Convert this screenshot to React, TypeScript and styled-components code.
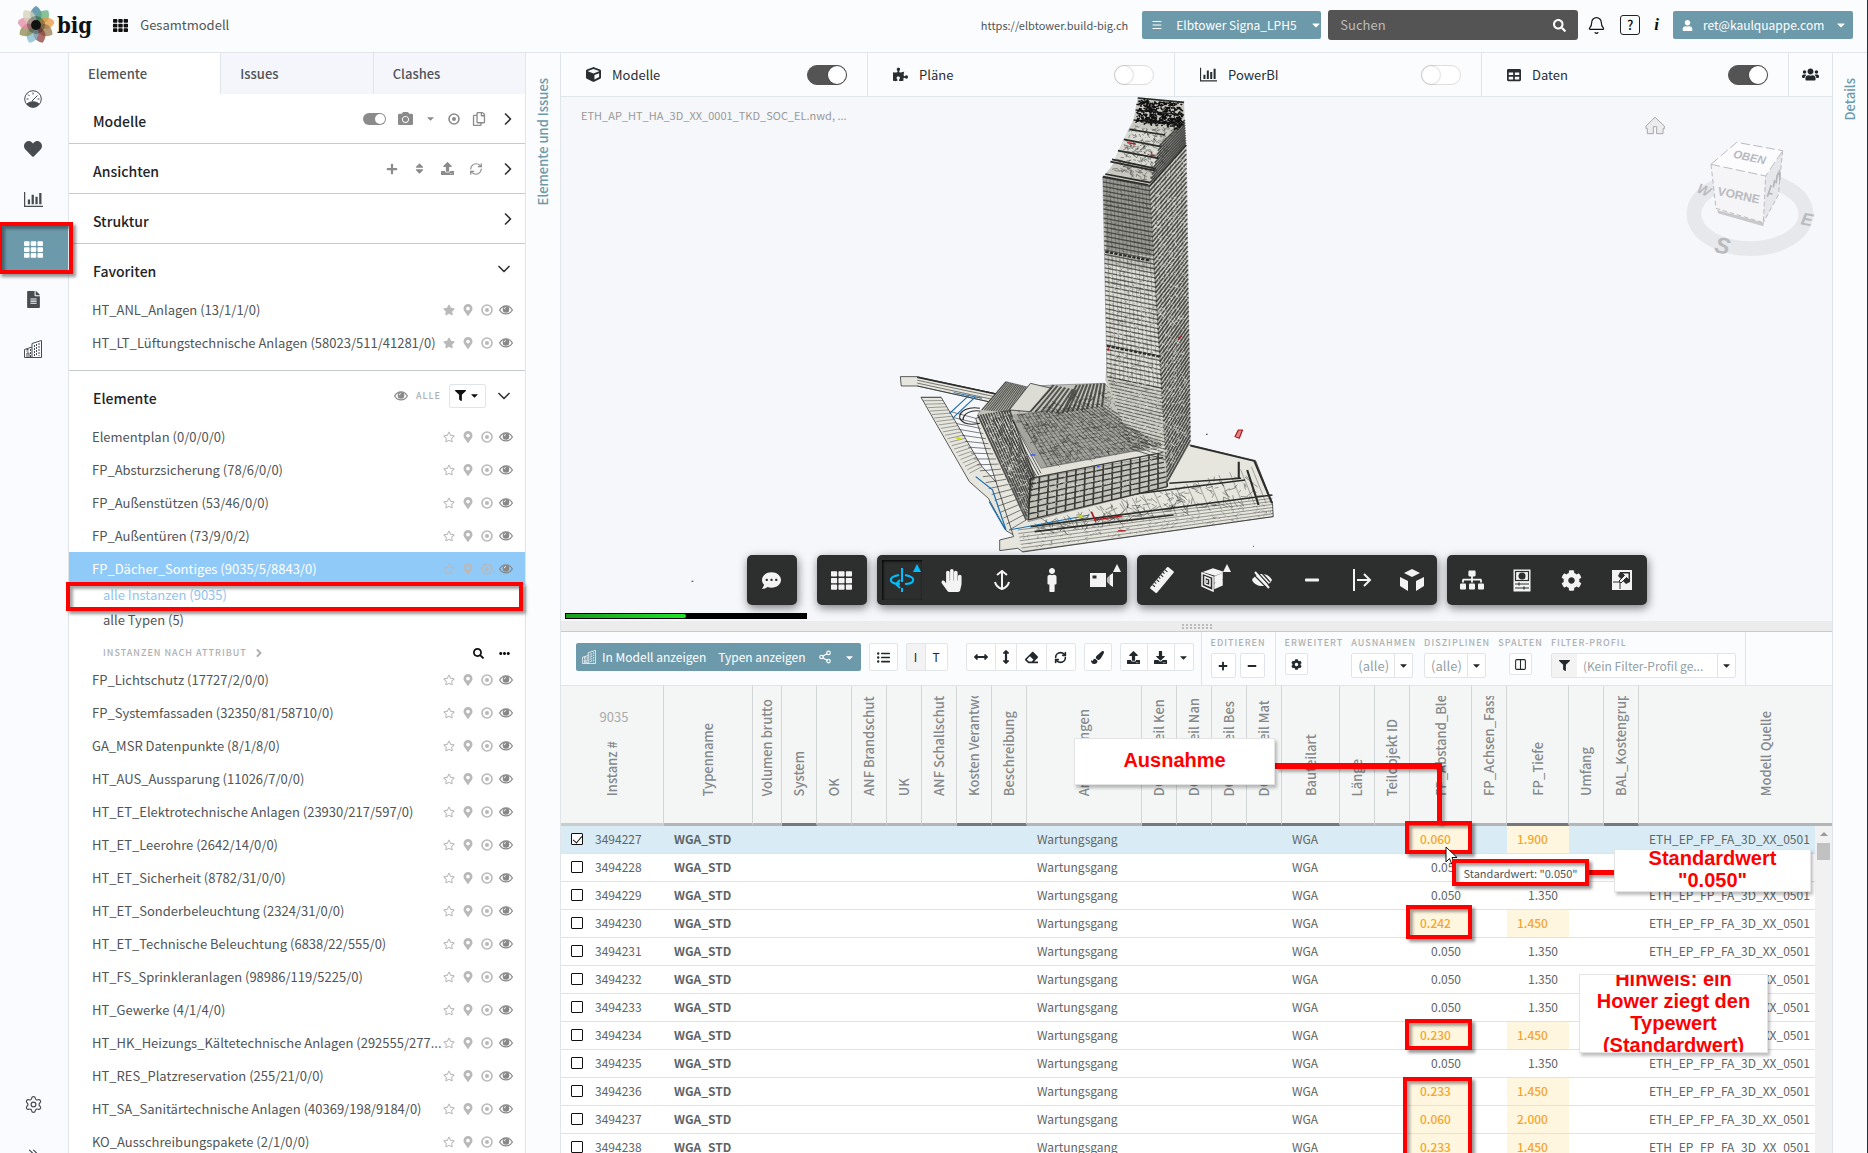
import React from 'react';
import styled, { createGlobalStyle, css } from 'styled-components';
import {
    FaArrowsAltH,
    FaArrowsAltV,
    FaCamera,
    FaCaretDown,
    FaCog,
    FaCommentDots,
    FaCube,
    FaDownload,
    FaEllipsisH,
    FaEraser,
    FaFileAlt,
    FaFilter,
    FaHandPaper,
    FaHeart,
    FaListUl,
    FaMale,
    FaMapMarkerAlt,
    FaMinus,
    FaPaintBrush,
    FaPlus,
    FaPuzzlePiece,
    FaRegCopy,
    FaRegStar,
    FaSearch,
    FaSitemap,
    FaSort,
    FaStar,
    FaTable,
    FaTh,
    FaUpload,
    FaUser,
    FaUsers,
} from 'react-icons/fa';
import {
    Bell,
    ChevronDown,
    ChevronRight,
    ChevronsRight,
    Columns2,
    Menu,
    RefreshCw,
    Settings,
    Share2,
} from 'lucide-react';

const sans = "'Noto Sans CJK SC', 'Noto Sans', sans-serif";

const colors = {
    teal: '#6d9aaa',
    border: '#dfe5e8',
    page: '#fafcfe',
    dark: '#2d2f2e',
    red: '#ff0000',
};

const GlobalStyle = createGlobalStyle`
    * {
        box-sizing: border-box;
    }

    body {
        margin: 0;
        background: ${colors.page};
        color: #505558;
        font-family: ${sans};
        font-size: 13px;
        line-height: 20px;
        overflow: hidden;
    }

    button, input, select {
        font: inherit;
        color: inherit;
        margin: 0;
    }

    button {
        background: none;
        border: 0;
        padding: 0;
        cursor: pointer;
    }

    svg {
        display: block;
        flex: none;
    }
`;

const Page = styled.div`
    position: relative;
    display: flex;
    flex-direction: column;
    height: 100vh;
    overflow: hidden;
    border-right: 1px solid #22333f;
`;

const Header = styled.header`
    display: flex;
    align-items: center;
    height: 53px;
    flex: none;
    padding: 0 14px 2px 18px;
    border-bottom: 1px solid ${colors.border};
`;

const Brand = styled.a`
    display: flex;
    align-items: center;
    gap: 3px;
    color: #111;
    text-decoration: none;
    font-family: 'DejaVu Serif Condensed', 'DejaVu Serif', serif;
    font-size: 22px;
    font-weight: bold;
    margin-right: 21px;
`;

const PageTitle = styled.h1`
    display: flex;
    align-items: center;
    gap: 12px;
    margin: 0 auto 0 0;
    font-size: 13px;
    font-weight: 400;

    svg {
        color: #111;
    }
`;

const HostLink = styled.a`
    color: #505558;
    font-size: 11px;
    text-decoration: none;
    margin-right: 14px;
`;

const TealButton = styled.button`
    display: flex;
    align-items: center;
    height: 28px;
    gap: 13px;
    padding: 0 6px 0 9px;
    border-radius: 2px;
    background: ${colors.teal};
    color: #fff;
    font-size: 12px;
    white-space: nowrap;

    svg:last-child {
        margin-left: auto;
    }
`;

const ProjectButton = styled(TealButton)`
    width: 179px;
`;

const UserButton = styled(TealButton)`
    width: 180px;
    gap: 10px;
`;

const SearchBox = styled.label`
    display: flex;
    align-items: center;
    width: 250px;
    height: 30px;
    margin: 0 9px 0 7px;
    padding: 0 12px 0 10px;
    border-radius: 3px;
    background: #545454;
    color: #fff;
`;

const SearchInput = styled.input`
    flex: 1;
    min-width: 0;
    border: 0;
    outline: 0;
    background: transparent;

    &::placeholder {
        color: #bbb;
        opacity: 1;
    }
`;

const HeaderIcon = styled.button`
    display: flex;
    justify-content: center;
    color: #111;
    margin-right: 14px;
`;

const HelpIcon = styled(HeaderIcon)`
    width: 20px;
    height: 20px;
    line-height: 18px;
    border: 1px solid #222;
    border-radius: 3px;
    font-weight: 500;
`;

const InfoIcon = styled(HeaderIcon)`
    font-family: 'Liberation Serif', serif;
    font-style: italic;
    font-weight: bold;
    font-size: 17px;
`;

const Body = styled.div`
    display: flex;
    flex: 1;
    min-height: 0;
`;

const Rail = styled.nav`
    display: flex;
    flex-direction: column;
    width: 69px;
    flex: none;
    padding-top: 21px;
    border-right: 1px solid ${colors.border};
    background: #f9fbfe;
    overflow: hidden;
`;

const RailButton = styled.button<{ $active?: boolean; $bottom?: boolean }>`
    display: flex;
    align-items: center;
    justify-content: center;
    flex: none;
    height: 50px;
    padding-right: 2px;
    color: ${(props) => (props.$active ? '#fff' : '#484c50')};
    background: ${(props) => (props.$active ? colors.teal : 'transparent')};
    margin-top: ${(props) => (props.$bottom ? 'auto' : '0')};
`;

const RailExpand = styled(RailButton)`
    align-items: flex-start;
    height: 24px;
    padding-top: 17px;
    overflow: hidden;
`;

const Sidebar = styled.aside`
    width: 457px;
    flex: none;
    background: #fff;
    border-right: 1px solid ${colors.border};
    overflow: hidden;
`;

const Tabs = styled.div`
    display: flex;
    height: 41px;
`;

const Tab = styled.button<{ $active?: boolean }>`
    flex: 1;
    text-align: left;
    padding: 0 0 0 19px;
    background: ${(props) => (props.$active ? '#fff' : '#f4f6fb')};
    border-left: ${(props) =>
        props.$active ? '0' : `1px solid ${colors.border}`};
    font-weight: 500;
`;

const Section = styled.section<{ $open?: boolean }>`
    border-bottom: 1px solid #c8cbcd;
    padding-bottom: ${(props) => (props.$open ? '11px' : '0')};

    &:last-child {
        border-bottom: 0;
    }
`;

const SectionHead = styled.div`
    display: flex;
    align-items: center;
    justify-content: space-between;
    height: 49px;
    padding: 0 11px 0 24px;

    h2 {
        margin: 4px 0 0;
        font-size: 14px;
        font-weight: 500;
        color: #1e2427;
    }
`;

const Tools = styled.div<{ $gap?: number }>`
    display: flex;
    align-items: center;
    color: #8b8b8b;
    gap: ${(props) => props.$gap ?? 12}px;
`;

const NextIcon = styled(ChevronRight)`
    color: #333;
    margin-right: -4px;
`;

const OpenIcon = styled(ChevronDown)`
    color: #333;
`;

const SmallCaps = styled.span`
    font-size: 9px;
    font-weight: 500;
    letter-spacing: 1px;
    color: #adb0b2;
    text-transform: uppercase;
`;

const FilterMenu = styled.button`
    display: flex;
    align-items: center;
    gap: 3px;
    padding: 0 5px;
    height: 24px;
    border: 1px solid #e2e5e8;
    border-radius: 2px;
    color: #111;
`;

const Row = styled.div<{ $selected?: boolean }>`
    display: flex;
    align-items: center;
    height: 33px;
    padding: 0 13px 0 23px;
    background: ${(props) => (props.$selected ? '#90caf9' : 'transparent')};
    color: ${(props) => (props.$selected ? '#fff' : '#505558')};
`;

const RowName = styled.a`
    flex: 1;
    min-width: 0;
    white-space: nowrap;
    color: inherit;
    text-decoration: none;
`;

const RowIcons = styled.span`
    display: flex;
    align-items: center;
    gap: 6px;
    color: #b9b9b9;

    button {
        display: flex;
        justify-content: center;
        width: 13px;
    }

    button:last-child {
        color: #888;
    }
`;

const SubList = styled.ul`
    list-style: none;
    margin: 0;
    padding: 0 0 0 34px;

    li {
        height: 25px;
    }
`;

const SubLink = styled.a<{ $active?: boolean }>`
    color: ${(props) => (props.$active ? '#90c4f0' : '#505558')};
    text-decoration: none;
`;

const AttributeRow = styled.div`
    display: flex;
    align-items: center;
    height: 28px;
    padding: 8px 15px 0 34px;
    gap: 15px;
    color: #111;

    ${SmallCaps} {
        display: flex;
        align-items: center;
        gap: 6px;
        margin-right: auto;
    }
`;

const SideStrip = styled.div<{ $right?: boolean }>`
    width: 35px;
    flex: none;
    display: flex;
    justify-content: center;
    background: ${colors.page};
    border: 0 solid ${colors.border};
    ${(props) =>
        props.$right
            ? css`
                  border-left-width: 1px;
              `
            : css`
                  border-right-width: 1px;
              `}
    padding-top: 25px;
`;

const VerticalLabel = styled.button`
    writing-mode: vertical-rl;
    transform: rotate(180deg);
    align-self: flex-start;
    color: ${colors.teal};
    font-weight: 500;
    font-size: 13px;
    white-space: nowrap;
`;

const Main = styled.main`
    display: flex;
    flex-direction: column;
    flex: 1;
    min-width: 0;
`;

const ViewBar = styled.div`
    display: flex;
    height: 44px;
    flex: none;
    border-bottom: 1px solid ${colors.border};
`;

const ViewCell = styled.label`
    display: flex;
    align-items: center;
    flex: 1;
    gap: 11px;
    padding: 0 20px 0 25px;
    border-right: 1px solid ${colors.border};
    color: #2a2e31;

    input {
        margin-left: auto;
    }
`;

const ViewUsers = styled.button`
    display: flex;
    align-items: center;
    justify-content: center;
    width: 43px;
    color: #22272a;
`;

const Switch = styled.input`
    appearance: none;
    position: relative;
    width: 40px;
    height: 20px;
    border-radius: 10px;
    background: #fff;
    border: 1px solid #ddd;

    &::after {
        content: '';
        position: absolute;
        top: 0;
        left: 0;
        width: 18px;
        height: 18px;
        border-radius: 50%;
        background: #fff;
        box-shadow: 0 0 2px rgba(0, 0, 0, 0.35);
    }

    &:checked {
        background: #545454;
        border-color: #545454;
    }

    &:checked::after {
        left: auto;
        right: 0;
    }
`;

const Viewer = styled.div`
    position: relative;
    flex: none;
    height: 524px;
    background: #f5f7fb;
    overflow: hidden;
`;

const Scene = styled.svg`
    position: absolute;
    top: 0;
    left: 0;
`;

const Cube = styled.svg`
    position: absolute;
    top: 3px;
    right: 2px;
`;

const FileNames = styled.p`
    position: relative;
    margin: 8px 0 0 20px;
    font-size: 11px;
    color: #999;
`;

const Dock = styled.div`
    position: absolute;
    left: 0;
    right: 0;
    bottom: 16px;
    display: flex;
    justify-content: center;
    gap: 10px;
`;

const DockGroup = styled.div<{ $gap?: boolean }>`
    display: flex;
    height: 50px;
    border-radius: 5px;
    background: ${colors.dark};
    box-shadow: 1px 3px 10px rgba(0, 0, 0, 0.5);
    margin-right: ${(props) => (props.$gap ? '10px' : '0')};
`;

const DockButton = styled.button<{ $active?: boolean }>`
    position: relative;
    display: flex;
    align-items: center;
    justify-content: center;
    width: 50px;
    color: ${(props) => (props.$active ? '#00bfff' : '#f3f3f3')};

    ${(props) =>
        props.$active &&
        css`
            margin: 5px;
            width: 40px;
            box-shadow: inset 1px 1px 3px #000;
        `}
`;

const DockMark = styled.i<{ $active?: boolean }>`
    position: absolute;
    right: ${(props) => (props.$active ? '1px' : '6px')};
    top: ${(props) => (props.$active ? '4px' : '9px')};
    border: 4px solid transparent;
    border-top: 0;
    border-bottom: 8px solid currentColor;
`;

const Progress = styled.div`
    position: absolute;
    left: 4px;
    bottom: 2px;
    width: 242px;
    height: 6px;
    padding: 1px;
    background: #000;

    div {
        height: 4px;
        border-radius: 0 2px 2px 0;
        background: linear-gradient(90deg, #189c1c, #20e428);
    }
`;

const Splitter = styled.div`
    display: flex;
    align-items: center;
    justify-content: center;
    height: 11px;
    flex: none;
    background: #ececec;
    border-bottom: 1px solid #c9ccce;
`;

const DataBar = styled.div`
    display: flex;
    align-items: stretch;
    height: 54px;
    flex: none;
    padding-left: 15px;
    border-bottom: 1px solid ${colors.border};
    color: #22282b;
`;

const BarSection = styled.div`
    display: flex;
    align-items: center;
    gap: 8px;
    padding: 0 7px 3px 0;
    border-right: 1px solid ${colors.border};
`;

const FieldSection = styled.div`
    display: flex;
    gap: 8px;
    padding: 3px 9px 0;
    border-right: 1px solid ${colors.border};
`;

const Field = styled.div<{ $center?: boolean }>`
    display: flex;
    flex-direction: column;
    align-items: ${(props) => (props.$center ? 'center' : 'flex-start')};
    gap: 2px;
    line-height: 16px;
`;

const FieldLabel = styled.label`
    font-size: 9px;
    font-weight: 500;
    letter-spacing: 1px;
    color: #adb0b2;
    text-transform: uppercase;
    white-space: nowrap;
`;

const ButtonPair = styled.div`
    display: flex;
    gap: 4px;
`;

const SquareButton = styled.button<{ $small?: boolean }>`
    display: flex;
    align-items: center;
    justify-content: center;
    width: ${(props) => (props.$small ? '23px' : '25px')};
    height: ${(props) => (props.$small ? '22px' : '25px')};
    border: 1px solid #e2e5e8;
    border-radius: 2px;
    background: #fff;
`;

const SelectBox = styled.div`
    position: relative;
    display: flex;
    height: 25px;
    border: 1px solid #e2e5e8;
    border-radius: 2px;
    background: #fff;
    align-items: center;

    > svg:first-child {
        box-sizing: content-box;
        padding: 6px 7px;
        background: #f3f3f3;
    }

    > svg:last-child {
        box-sizing: content-box;
        position: absolute;
        right: 0;
        padding: 6px 3px;
        border-left: 1px solid #e2e5e8;
        pointer-events: none;
    }
`;

const Select = styled.select<{ $wide?: boolean }>`
    appearance: none;
    width: ${(props) => (props.$wide ? '158px' : '60px')};
    padding: 0 18px 0 6px;
    border: 0;
    background: transparent;
    color: #93a0a6;
    font-size: ${(props) => (props.$wide ? '12px' : '13px')};
`;

const TealGroup = styled.div`
    display: flex;
    height: 28px;
    border-radius: 2px;
    background: ${colors.teal};
    color: #fff;

    button {
        display: flex;
        align-items: center;
        gap: 6px;
        padding: 0 6px;
        font-size: 12px;
        white-space: nowrap;
    }
`;

const ButtonGroup = styled.div<{ $gap?: boolean }>`
    display: flex;
    height: 28px;
    border: 1px solid #e2e5e8;
    border-radius: 2px;
    background: #fff;
    margin-right: ${(props) => (props.$gap ? '10px' : '0')};
    font-size: 12px;
`;

const GroupButton = styled.button<{ $width: number; $pressed?: boolean }>`
    display: flex;
    align-items: center;
    justify-content: center;
    width: ${(props) => props.$width}px;
    background: ${(props) => (props.$pressed ? '#f3f3f3' : 'transparent')};

    & + & {
        border-left: 1px solid #e2e5e8;
    }
`;

const TablePanel = styled.div`
    position: relative;
    flex: 1;
    min-height: 0;
    overflow: hidden;
    background: #fff;
`;

const Table = styled.table`
    width: 100%;
    table-layout: fixed;
    border-collapse: separate;
    border-spacing: 0;
    color: #606466;
`;

const HeadCell = styled.th<{ $bar: string }>`
    height: 140px;
    padding: 0 0 27px;
    vertical-align: bottom;
    background: #f4f6f6;
    border-bottom: 3px solid ${(props) => props.$bar};
    border-right: 1px solid #d3d6d7;
    font-weight: 500;
    color: #85898b;

    &:last-child {
        border-right: 0;
        padding-left: 60px;
    }

    span {
        display: inline-block;
        vertical-align: bottom;
        writing-mode: vertical-rl;
        transform: rotate(180deg);
        max-height: 100px;
        overflow: hidden;
        white-space: nowrap;
    }

    small {
        display: block;
        margin-bottom: 14px;
        padding-left: 4px;
        font-size: 13px;
        font-weight: 400;
        color: #aaa;
    }
`;

const DataRow = styled.tr<{ $selected?: boolean }>`
    background: ${(props) => (props.$selected ? '#d9ecf5' : '#fff')};
`;

const Cell = styled.td<{ $exception?: boolean; $indent?: number }>`
    height: 28px;
    padding: 0 0 2px ${(props) => props.$indent ?? 10}px;
    border-bottom: 1px solid #dfe3e5;
    overflow: hidden;
    white-space: nowrap;
    font-size: 12px;

    ${(props) =>
        props.$exception &&
        css`
            padding-left: 10px;
            background: #fff6e0;
            color: #f5a52a;
            font-weight: 500;
        `}
`;

const TypeCell = styled(Cell)`
    font-weight: 700;
`;

const IdLabel = styled.label`
    display: flex;
    align-items: center;
    gap: 12px;
`;

const CheckBox = styled.input`
    appearance: none;
    position: relative;
    width: 12px;
    height: 12px;
    border: 1px solid #111;
    border-radius: 1px;
    background: #fff;

    &:checked::after {
        content: '';
        position: absolute;
        left: 3px;
        top: 0;
        width: 4px;
        height: 8px;
        border: solid #111;
        border-width: 0 1px 1px 0;
        transform: rotate(40deg);
    }
`;

const ScrollTrack = styled.div`
    position: absolute;
    top: 140px;
    right: 0;
    bottom: 0;
    width: 17px;
    padding: 6px 2px;
    background: #f1f1f1;

    &::before {
        content: '';
        display: block;
        width: 0;
        margin: 0 auto 7px;
        border: 4px solid transparent;
        border-top: 0;
        border-bottom-color: #9b9b9b;
    }

    &::after {
        content: '';
        display: block;
        height: 17px;
        background: #c1c1c1;
    }
`;

const Annotations = styled.div`
    position: absolute;
    inset: 0;
    pointer-events: none;
`;

type Box = { $x: number; $y: number; $w: number; $h: number };

const placed = css<Box>`
    position: absolute;
    left: ${(props) => props.$x}px;
    top: ${(props) => props.$y}px;
    width: ${(props) => props.$w}px;
    height: ${(props) => props.$h}px;
`;

const RedFrame = styled.div<Box>`
    ${placed}
    border: 4px solid ${colors.red};
    box-shadow: 3px 3px 3px rgba(0, 0, 0, 0.4),
        inset 3px 3px 3px rgba(0, 0, 0, 0.35);
`;

const RedLine = styled.div<Box>`
    ${placed}
    background: ${colors.red};
    box-shadow: 3px 3px 3px rgba(0, 0, 0, 0.3);
`;

const Callout = styled.div<Box>`
    ${placed}
    display: flex;
    align-items: center;
    justify-content: center;
    overflow: hidden;
    padding-bottom: 4px;
    background: #fff;
    border: 1px solid #e4e4e4;
    box-shadow: 2px 3px 3px rgba(0, 0, 0, 0.25);
    color: ${colors.red};
    font-family: 'Liberation Sans', Arial, sans-serif;
    font-weight: bold;
    font-size: 20px;
    line-height: 22px;
    text-align: center;
`;

const ValueTip = styled(RedFrame)`
    display: flex;
    align-items: center;
    justify-content: center;
    background: #fff;
    color: #505558;
    font-size: 11px;
    white-space: nowrap;
`;

const Pointer = styled.svg`
    position: absolute;
    left: 1445px;
    top: 846px;
`;

const petals = [
    '#3c7f9b',
    '#5fae77',
    '#e9973c',
    '#9a7b4d',
    '#8b3f3a',
    '#7fb9cc',
    '#8d8a4e',
    '#e48aa4',
    '#d8d2b8',
];

const Logo = () => (
    <svg width="36" height="38" viewBox="-18 -19 36 38">
        {petals.map((fill, i) => (
            <path
                key={fill}
                d="M0 0C-10 -9 -5 -16 0 -19C5 -16 10 -9 0 0Z"
                fill={fill}
                opacity="0.75"
                transform={`rotate(${i * 40})`}
            />
        ))}
        <circle r="9" fill="#111" opacity="0.3" />
        <circle r="5" fill="#111" />
    </svg>
);

const ChartIcon = ({ size = 19 }: { size?: number }) => (
    <svg width={size} height={size * 0.85} viewBox="0 0 20 17" fill="currentColor">
        <path d="M0 1h1.3v14.5H20V17H0zM4 9h2.4v5H4zM8 4h2.4v10H8zM12 6h2.4v8H12zM16 2h2.4v12H16z" />
    </svg>
);

const BuildingIcon = ({ size = 18 }: { size?: number }) => (
    <svg
        width={size}
        height={size}
        viewBox="0 0 18 18"
        fill="none"
        stroke="currentColor"
    >
        <path d="M.5 17.500V9.500L8 7M.5 17.500H17.500M8 17.500V3.500L17.500.5V17.500M5 17v-4H3v4" />
        <path
            d="M10.500 5v11M12.500 4v12M15 3v13M2.500 11h3M2.500 9.500h3M6.500 9v8"
            strokeDasharray="2 1"
        />
    </svg>
);

const GaugeIcon = () => (
    <svg width="18" height="18" viewBox="0 0 18 18" fill="none" stroke="currentColor">
        <circle cx="9" cy="9" r="8.300" />
        <path d="M3 14C6 11 12 11 15 14C12 18 6 18 3 14Z" fill="currentColor" />
        <path d="M8 11L13.500 5.500M9 2.500v2M4 4.500l1.500 1.500M2.500 9h2M13.500 9h2" />
    </svg>
);

const TargetIcon = () => (
    <svg width="12" height="12" viewBox="0 0 12 12">
        <circle
            cx="6"
            cy="6"
            r="5"
            fill="none"
            stroke="currentColor"
            strokeWidth="1.600"
        />
        <circle cx="6" cy="6" r="2" fill="currentColor" />
    </svg>
);

const EyeIcon = () => (
    <svg width="14" height="10" viewBox="0 0 14 10">
        <path
            d="M.6 5C3.500 -.6 10.500 -.6 13.400 5C10.500 10.200 3.500 10.200 .6 5Z"
            fill="none"
            stroke="currentColor"
            strokeWidth="1.200"
        />
        <circle cx="7" cy="4.400" r="3.300" fill="currentColor" />
        <path
            d="M5.200 4.200A1.900 1.900 0 0 1 7 2.500"
            fill="none"
            stroke="#fff"
            strokeWidth="0.800"
        />
    </svg>
);

const OrbitIcon = () => (
    <svg
        width="26"
        height="26"
        viewBox="0 0 26 26"
        fill="none"
        stroke="currentColor"
        strokeWidth="2"
    >
        <path d="M13 1v14M13 21v4" />
        <path d="M10 8C4 9 1 11 2 14c1 2 5 3 9 3M16 8c6 1 9 3 8 6-1 2-4 3-8 3" />
        <path d="M11 13l-4 4 4 4" />
    </svg>
);

const PanIcon = () => (
    <svg
        width="20"
        height="22"
        viewBox="0 0 20 22"
        fill="none"
        stroke="currentColor"
        strokeWidth="2"
    >
        <path d="M10 2v18M5 6l5-4 5 4M3 13C4 17 7 19 10 20C13 19 16 17 17 13" />
    </svg>
);

const VideoIcon = () => (
    <svg width="24" height="16" viewBox="0 0 24 16" fill="currentColor">
        <path d="M0 1h16v14H0zM2.500 3.500v3h4v-3z" fillRule="evenodd" />
        <path d="M17 6l3-3v10l-3-3z" opacity="0.7" />
        <path d="M20 3l3-2v14l-3-2z" />
    </svg>
);

const RulerIcon = () => (
    <svg width="28" height="28" viewBox="0 0 26 26">
        <g transform="rotate(-50 13 13)">
            <rect x="0" y="9" width="26" height="8" rx="1" fill="currentColor" />
            <path
                d="M4 9v3M7 9v2M10 9v3M13 9v2M16 9v3M19 9v2M22 9v3"
                stroke={colors.dark}
            />
        </g>
    </svg>
);

const SectionIcon = () => (
    <svg
        width="22"
        height="24"
        viewBox="0 0 22 24"
        fill="none"
        stroke="currentColor"
        strokeWidth="1.500"
    >
        <path d="M1 5l11 4v14L1 18zM4 9l5 2v7l-5-2zM6 12v3" />
        <path d="M4 4l8-3 9 3-7 3zM14 9l7-3v5l-3 3h-4zM14 16l7-3v4l-7 3z" fill="currentColor" />
    </svg>
);

const HideIcon = () => (
    <svg width="22" height="20" viewBox="0 0 22 20">
        <path d="M1 10C5 2 17 2 21 10C17 18 5 18 1 10Z" fill="currentColor" />
        <path
            d="M3 5l12 12M7 3l11 12M11 3l8 9"
            stroke={colors.dark}
            strokeWidth="1.200"
        />
        <path d="M4 2l14 16" stroke="currentColor" strokeWidth="2" />
    </svg>
);

const LevelIcon = () => (
    <svg
        width="20"
        height="24"
        viewBox="0 0 20 24"
        fill="none"
        stroke="currentColor"
        strokeWidth="2"
    >
        <path d="M2 1v22M5 12h13M12 6l6 6-6 6" />
    </svg>
);

const ExplodeIcon = () => (
    <svg width="26" height="24" viewBox="0 0 26 24" fill="currentColor">
        <path d="M13 1l8 4-8 4-8-4zM1 9l8 4v10l-8-5zM25 9l-8 4v10l8-5z" />
    </svg>
);

const PropertiesIcon = () => (
    <svg width="18" height="23" viewBox="0 0 18 23">
        <rect x="0.5" y="0.5" width="17" height="22" fill="currentColor" />
        <g stroke={colors.dark} strokeWidth="1.200" fill={colors.dark}>
            <rect x="2.500" y="2.500" width="13" height="9" fill="none" />
            <circle cx="9" cy="7" r="3" />
            <path d="M2 15h14M2 19h14M6 13.500v3M11 17.500v3" />
        </g>
    </svg>
);

const FullscreenIcon = () => (
    <svg width="20" height="20" viewBox="0 0 20 20">
        <rect x="1" y="1" width="18" height="18" fill="none" stroke="currentColor" strokeWidth="2" />
        <path d="M2 2H8L6 6L14 14L18 12V18H2Z" fill="currentColor" />
        <path d="M10 3h7v7l-2.500-2.500L9 13 7 11l5.500-5.500z" fill="currentColor" stroke={colors.dark} />
        <path d="M1 12h7v7" fill="none" stroke={colors.dark} />
    </svg>
);

const MiniToggle = () => (
    <svg width="23" height="12" viewBox="0 0 23 12">
        <rect width="23" height="12" rx="6" fill="#8b8b8b" />
        <circle cx="17" cy="6" r="5" fill="#fff" />
    </svg>
);

const GripIcon = () => (
    <svg width="30" height="5" viewBox="0 0 30 5" fill="#bbb">
        {Array.from({ length: 8 }, (_, i) => (
            <path key={i} d={`M${i * 4} 0h2v2h-2zM${i * 4} 3h2v2h-2z`} />
        ))}
    </svg>
);

type Point = [number, number];

const mix = (a: Point, b: Point, t: number): Point => [
    a[0] + (b[0] - a[0]) * t,
    a[1] + (b[1] - a[1]) * t,
];

const line = (a: Point, b: Point) =>
    `M${a[0].toFixed(1)} ${a[1].toFixed(1)}L${b[0].toFixed(1)} ${b[1].toFixed(1)}`;

// rungs between two edges, from a0-b0 to a1-b1
const rungs = (a0: Point, a1: Point, b0: Point, b1: Point, count: number) =>
    Array.from({ length: count + 1 }, (_, i) =>
        line(mix(a0, a1, i / count), mix(b0, b1, i / count)),
    ).join('');

const mesh = (
    a0: Point,
    a1: Point,
    b0: Point,
    b1: Point,
    rows: number,
    cols: number,
) => rungs(a0, a1, b0, b1, rows) + rungs(a0, b0, a1, b1, cols);

let seed = 7;
const random = () => {
    seed = (seed * 16807) % 2147483647;
    return seed / 2147483647;
};

// short random strokes inside a quad, for furniture and structure detail
const scatter = (
    a0: Point,
    a1: Point,
    b0: Point,
    b1: Point,
    count: number,
    len: number,
) =>
    Array.from({ length: count }, () => {
        const t = random();
        const p = mix(mix(a0, a1, t), mix(b0, b1, t), random());
        const q: Point = [
            p[0] + (random() - 0.5) * len,
            p[1] + (random() - 0.5) * len,
        ];
        return line(p, q);
    }).join('');

const ink = {
    crown: scatter([948, 30], [940, 95], [1050, 42], [1053, 118], 420, 14),
    terraces: scatter([930, 110], [892, 245], [1040, 115], [980, 275], 260, 24),
    terraceEdges:
        'M862 260L970 285M868 252L975 278M880 215L985 242M884 208L988 236M898 182L995 205M912 148L1000 170M925 118L1010 135M935 90L1055 105M940 60L1055 75M945 24L1055 37',
    leftFloors: rungs([862, 262], [872, 860], [972, 288], [1003, 895], 44),
    leftFloorsLow: rungs([872, 860], [925, 1075], [1003, 895], [1012, 1110], 20),
    leftColumns: rungs([862, 262], [972, 288], [872, 860], [1003, 895], 13),
    rightFloors: rungs([972, 290], [1015, 1175], [1060, 165], [1070, 1050], 64),
    rightTop: rungs([995, 170], [972, 290], [1057, 90], [1060, 165], 10),
    rightColumns: rungs([972, 290], [1060, 165], [1015, 1175], [1070, 1050], 7),
    leftDetail: scatter([866, 270], [880, 900], [970, 290], [1005, 1000], 620, 14),
    leftLight: scatter([872, 530], [880, 860], [980, 550], [1000, 900], 380, 14),
    rightDetail: scatter([978, 300], [1015, 1150], [1055, 180], [1065, 1040], 620, 18),
    lowDetail: scatter([872, 860], [930, 1065], [1003, 895], [1012, 1100], 280, 18),
    front: mesh([690, 1165], [685, 1290], [1015, 1085], [1015, 1190], 7, 15),
    frontLight: scatter([695, 1175], [690, 1280], [1010, 1095], [1010, 1180], 180, 12),
    leftFacade: rungs([565, 975], [640, 960], [680, 1290], [700, 1160], 12),
    facadeDetail: scatter([575, 980], [640, 970], [675, 1270], [695, 1170], 240, 20),
    courtyard: rungs([660, 975], [860, 940], [730, 1130], [1005, 1065], 24),
    courtyardCross: rungs([660, 975], [730, 1130], [860, 940], [1005, 1065], 16),
    courtyardDetail: scatter([650, 960], [730, 1130], [880, 900], [1005, 1065], 520, 26),
    balconies:
        rungs([690, 965], [765, 970], [745, 885], [800, 900], 6) +
        rungs([765, 970], [860, 950], [800, 885], [866, 880], 8),
    roof: rungs([575, 960], [640, 968], [632, 875], [680, 890], 12),
    stairs: rungs([430, 922], [545, 1150], [478, 922], [575, 1130], 22),
    walkway: rungs([500, 965], [640, 1320], [560, 985], [680, 1290], 20),
    slab: rungs([660, 1320], [670, 1385], [1265, 1225], [1267, 1280], 6),
    slabDetail: scatter([665, 1335], [672, 1380], [1262, 1240], [1264, 1278], 160, 16),
    deck: scatter([720, 1300], [720, 1330], [1200, 1150], [1240, 1225], 190, 40),
    deckLines: rungs([700, 1300], [1215, 1130], [720, 1335], [1250, 1240], 20),
    arm: rungs([421, 862], [421, 888], [610, 912], [590, 935], 3),
    roofEdge: rungs([640, 975], [600, 990], [715, 1150], [690, 1175], 5),
};

const Building = () => (
    <Scene width="100%" height="524" aria-hidden="true">
        <g
            transform="translate(179 -7) scale(.4209 .3333)"
            fill="none"
            stroke="#2c2c2a"
            strokeLinejoin="round"
        >
            <g fill="#e6e6df" strokeWidth="2">
                <path d="M381 860H421L610 912L590 935L421 888H383Z" />
                <path d="M430 922H478L575 1130L690 1290L650 1335L632 1322L590 1225L545 1175Z" />
                <path d="M1070 1065L1225 1112L1265 1240L1267 1280L672 1386L660 1375L617 1382V1350L650 1340L560 985L630 960L1000 1060Z" />
            </g>
            <g strokeWidth="2">
                <path d={ink.arm} opacity="0.8" />
                <path d={ink.stairs} opacity="0.55" />
                <path d={ink.walkway} opacity="0.8" />
                <path d={ink.slab} opacity="0.6" />
                <path d={ink.slabDetail} opacity="0.4" />
                <path d={ink.deck} opacity="0.6" />
                <path d={ink.deckLines} opacity="0.5" />
            </g>
            <path
                d="M1020 1180L1190 1165M920 1215L1200 1170M690 1310L1265 1215M700 1325L1030 1275M1205 1140L1232 1245M1185 1115V1165M1070 1067L1222 1113L1264 1240"
                strokeWidth="5"
            />
            <path d="M421 862L608 912" strokeWidth="5" />
            <path
                d="M565 972L632 875L680 890L745 885L866 880L1015 1060V1190L685 1295Z"
                fill="#c2c2bb"
            />
            <path
                d="M640 975L700 965L860 950L1010 1065L930 1085L715 1140Z"
                fill="#a5a59f"
                stroke="none"
            />
            <path
                d="M715 1135L930 1085L1005 1075V1095L700 1165L600 990L640 975Z"
                fill="#e2e2db"
            />
            <path d={ink.courtyard} strokeWidth="2" opacity="0.7" />
            <path d={ink.courtyardCross} strokeWidth="1" opacity="0.6" />
            <path d={ink.courtyardDetail} strokeWidth="2" opacity="0.6" />
            <path d={ink.leftFacade} strokeWidth="4" opacity="0.8" />
            <path d={ink.facadeDetail} strokeWidth="2" stroke="#ededE6" opacity="0.7" />
            <path d={ink.roofEdge} strokeWidth="2" />
            <path d={ink.roof} strokeWidth="3" opacity="0.7" />
            <path
                d="M640 960L690 880L740 895L690 965Z"
                fill="#dcdcd5"
                strokeWidth="2"
            />
            <path d={ink.balconies} strokeWidth="5" opacity="0.75" />
            <path d={ink.front} strokeWidth="4" opacity="0.9" />
            <path d={ink.frontLight} strokeWidth="2" stroke="#ededE6" opacity="0.7" />
            <path
                d="M522 985C520 960 545 950 570 955M530 990C530 970 548 960 570 963M522 985C530 1005 550 1005 570 1000"
                strokeWidth="3"
            />
            <path
                d="M945 22L1055 35L1057 110L1062 500L1068 760L1070 1060L1015 1180L1000 1060L910 1000L868 870L872 780L862 262L885 225L900 180L935 90Z"
                fill="#c9c9c2"
                stroke="none"
            />
            <path
                d="M862 262L972 288L980 500L870 480Z"
                fill="#999993"
                stroke="none"
            />
            <path
                d="M868 520L985 545L1000 900L872 860Z"
                fill="#deded7"
                stroke="none"
            />
            <path
                d="M925 110L1000 125L985 240L890 215Z"
                fill="#dcdcd6"
                stroke="none"
            />
            <path d={ink.leftFloors} strokeWidth="4" opacity="0.7" />
            <path d={ink.leftFloorsLow} strokeWidth="3" opacity="0.65" />
            <path d={ink.leftColumns} strokeWidth="1" opacity="0.8" />
            <path d={ink.rightFloors} strokeWidth="4" opacity="0.8" />
            <path d={ink.rightTop} strokeWidth="4" opacity="0.8" />
            <path d={ink.rightColumns} strokeWidth="1" opacity="0.6" />
            <path d={ink.leftDetail} strokeWidth="2" opacity="0.4" />
            <path d={ink.leftLight} strokeWidth="2" stroke="#f0f0ea" opacity="0.7" />
            <path d={ink.lowDetail} strokeWidth="2" stroke="#f0f0ea" opacity="0.6" />
            <path d={ink.rightDetail} strokeWidth="2" stroke="#f0f0ea" opacity="0.6" />
            <path d={ink.terraces} strokeWidth="2" opacity="0.6" />
            <path d={ink.terraceEdges} strokeWidth="5" />
            <path d={ink.crown} strokeWidth="4" stroke="#111" />
            <path
                d="M868 485L975 512M872 768L998 800"
                strokeWidth="7"
                strokeDasharray="8 3"
            />
            <g stroke="#1d6fae" strokeWidth="3">
                <path d="M545 915L498 970M560 920L505 985M508 908L575 925M560 1160L600 1200L632 1320M592 1235L630 1318M640 1320L830 1275" />
            </g>
            <g stroke="#b3161b" strokeWidth="4">
                <path d="M835 1265L845 1295M845 1290L908 1278M898 1323H916M920 158L940 162M975 195L985 197M1040 745L1050 738M875 775V782" />
                <path
                    d="M1176 1040L1184 1020H1194L1186 1045Z"
                    fill="#d88"
                    strokeWidth="3"
                />
            </g>
            <path
                d="M514 1042L524 1048M804 1276L814 1280"
                stroke="#d6d800"
                strokeWidth="6"
            />
            <path
                d="M690 1095H702M848 1129H854"
                stroke="#355bff"
                strokeWidth="5"
            />
            <path
                d="M1107 1033H1111M1219 1369H1221M-115 1474H-111"
                strokeWidth="3"
            />
        </g>
    </Scene>
);

const ViewCube = () => (
    <Cube width="190" height="170" viewBox="0 0 570 510" role="img" aria-label="Ansichtswürfel">
        <path d="M18 78L45 52L73 78V86H69V101H50V80H40V101H22V86H18Z" fill="#ececef" stroke="#a8a8ac" strokeWidth="3" />
        <ellipse cx="330" cy="342" rx="168" ry="104" fill="none" stroke="#e7e8eb" strokeWidth="44" />
        <path d="M232 330L372 368L370 379L234 340Z" fill="#c9c9cb" />
        <path d="M213 193L377 228L370 368L228 325Z" fill="#f5f5f7" />
        <path d="M377 228L428 152L415 285L370 368Z" fill="#e6e7ea" />
        <path d="M213 193L290 127L428 152L377 228Z" fill="#fcfcfe" />
        <g fill="none" stroke="#bcbcc0" strokeWidth="3" strokeDasharray="28 10">
            <path d="M213 193L377 228L428 152M213 193L290 127L428 152" />
            <path d="M213 193L228 325L370 368L377 228M428 152L415 285L370 368" strokeDasharray="14 8" />
        </g>
        <g fill="#b9bac0" fontFamily="Liberation Sans, Arial, sans-serif" fontWeight="bold" textAnchor="middle">
            <text transform="translate(294 298) rotate(12)" fontSize="36">VORNE</text>
            <text transform="translate(326 183) rotate(12)" fontSize="34" fontStyle="italic">OBEN</text>
            <text transform="translate(186 283) rotate(24)" fontSize="42" fontStyle="italic">W</text>
            <text transform="translate(498 376) rotate(10)" fontSize="52" fontStyle="italic">E</text>
            <text transform="translate(243 460) rotate(12)" fontSize="68" fontStyle="italic">S</text>
        </g>
        <path d="M382 290L394 255M386 280L398 282M400 262L404 240M408 250L412 225L418 215L420 240" stroke="#b4b5ba" strokeWidth="5" fill="none" />
    </Cube>
);

const favourites = [
    'HT_ANL_Anlagen (13/1/1/0)',
    'HT_LT_Lüftungstechnische Anlagen (58023/511/41281/0)',
];

const elementsTop = [
    'Elementplan (0/0/0/0)',
    'FP_Absturzsicherung (78/6/0/0)',
    'FP_Außenstützen (53/46/0/0)',
    'FP_Außentüren (73/9/0/2)',
    'FP_Dächer_Sontiges (9035/5/8843/0)',
];

const elementsBottom = [
    'FP_Lichtschutz (17727/2/0/0)',
    'FP_Systemfassaden (32350/81/58710/0)',
    'GA_MSR Datenpunkte (8/1/8/0)',
    'HT_AUS_Aussparung (11026/7/0/0)',
    'HT_ET_Elektrotechnische Anlagen (23930/217/597/0)',
    'HT_ET_Leerohre (2642/14/0/0)',
    'HT_ET_Sicherheit (8782/31/0/0)',
    'HT_ET_Sonderbeleuchtung (2324/31/0/0)',
    'HT_ET_Technische Beleuchtung (6838/22/555/0)',
    'HT_FS_Sprinkleranlagen (98986/119/5225/0)',
    'HT_Gewerke (4/1/4/0)',
    'HT_HK_Heizungs_Kältetechnische Anlagen (292555/277...',
    'HT_RES_Platzreservation (255/21/0/0)',
    'HT_SA_Sanitärtechnische Anlagen (40369/198/9184/0)',
    'KO_Ausschreibungspakete (2/1/0/0)',
];

const light = '#b3b5b6';
const strong = '#75797b';

const columns: { name: string; width?: number; bar: string }[] = [
    { name: 'Instanz #', width: 103, bar: '#c9cccd' },
    { name: 'Typenname', width: 89, bar: light },
    { name: 'Volumen brutto', width: 29, bar: light },
    { name: 'System', width: 35, bar: strong },
    { name: 'OK', width: 35, bar: light },
    { name: 'ANF Brandschutz', width: 35, bar: light },
    { name: 'UK', width: 35, bar: light },
    { name: 'ANF Schallschutz', width: 35, bar: light },
    { name: 'Kosten Verantwo', width: 35, bar: strong },
    { name: 'Beschreibung', width: 35, bar: strong },
    { name: 'Anmerkungen', width: 115, bar: light },
    { name: 'DO_Bauteil Ken', width: 35, bar: strong },
    { name: 'DO_Bauteil Nan', width: 35, bar: strong },
    { name: 'DO_Bauteil Bes', width: 35, bar: strong },
    { name: 'DO_Bauteil Mat', width: 35, bar: strong },
    { name: 'Bauteilart', width: 58, bar: strong },
    { name: 'Länge', width: 35, bar: light },
    { name: 'Teilobjekt ID', width: 35, bar: light },
    { name: 'FP_Abstand_Blech', width: 62, bar: light },
    { name: 'FP_Achsen_Fassa', width: 35, bar: light },
    { name: 'FP_Tiefe', width: 62, bar: strong },
    { name: 'Umfang', width: 35, bar: light },
    { name: 'BAL_Kostengrup', width: 35, bar: strong },
    { name: 'Modell Quelle', bar: light },
];

const instances = [
    { id: 3494227, gap: '0.060', depth: '1.900', exception: true },
    { id: 3494228, gap: '0.050', depth: '1.350' },
    { id: 3494229, gap: '0.050', depth: '1.350' },
    { id: 3494230, gap: '0.242', depth: '1.450', exception: true },
    { id: 3494231, gap: '0.050', depth: '1.350' },
    { id: 3494232, gap: '0.050', depth: '1.350' },
    { id: 3494233, gap: '0.050', depth: '1.350' },
    { id: 3494234, gap: '0.230', depth: '1.450', exception: true },
    { id: 3494235, gap: '0.050', depth: '1.350' },
    { id: 3494236, gap: '0.233', depth: '1.450', exception: true },
    { id: 3494237, gap: '0.060', depth: '2.000', exception: true },
    { id: 3494238, gap: '0.233', depth: '1.450', exception: true },
];

const ElementRow: React.FC<{
    name: string;
    starred?: boolean;
    selected?: boolean;
}> = ({ name, starred, selected }) => (
    <Row $selected={selected}>
        <RowName href="#">{name}</RowName>
        <RowIcons>
            <button aria-label="Favorit">
                {starred ? <FaStar size={12} /> : <FaRegStar size={12} />}
            </button>
            <button aria-label="Lokalisieren">
                <FaMapMarkerAlt size={12} />
            </button>
            <button aria-label="Isolieren">
                <TargetIcon />
            </button>
            <button aria-label="Sichtbarkeit">
                <EyeIcon />
            </button>
        </RowIcons>
    </Row>
);

const TopBar = () => (
    <Header>
        <Brand href="#">
            <Logo />
            big
        </Brand>
        <PageTitle>
            <FaTh size={15} />
            Gesamtmodell
        </PageTitle>
        <HostLink href="#">https://elbtower.build-big.ch</HostLink>
        <ProjectButton>
            <Menu size={12} />
            Elbtower Signa_LPH5
            <FaCaretDown size={12} />
        </ProjectButton>
        <SearchBox>
            <SearchInput placeholder="Suchen" aria-label="Suchen" />
            <FaSearch size={13} />
        </SearchBox>
        <HeaderIcon aria-label="Benachrichtigungen">
            <Bell size={19} strokeWidth={1.5} />
        </HeaderIcon>
        <HelpIcon>?</HelpIcon>
        <InfoIcon>i</InfoIcon>
        <UserButton>
            <FaUser size={11} />
            ret@kaulquappe.com
            <FaCaretDown size={12} />
        </UserButton>
    </Header>
);

const LeftRail = () => (
    <Rail>
        <RailButton aria-label="Dashboard">
            <GaugeIcon />
        </RailButton>
        <RailButton aria-label="Favoriten">
            <FaHeart size={18} />
        </RailButton>
        <RailButton aria-label="Auswertung">
            <ChartIcon />
        </RailButton>
        <RailButton aria-label="Gesamtmodell" $active>
            <FaTh size={19} />
        </RailButton>
        <RailButton aria-label="Dokumente">
            <FaFileAlt size={17} />
        </RailButton>
        <RailButton aria-label="Gebäude">
            <BuildingIcon />
        </RailButton>
        <RailButton aria-label="Einstellungen" $bottom>
            <Settings size={19} strokeWidth={1.5} />
        </RailButton>
        <RailExpand aria-label="Ausklappen">
            <ChevronsRight size={14} />
        </RailExpand>
    </Rail>
);

const ElementPanel = () => (
    <Sidebar>
        <Tabs>
            <Tab $active>Elemente</Tab>
            <Tab>Issues</Tab>
            <Tab>Clashes</Tab>
        </Tabs>
        <Section>
            <SectionHead>
                <h2>Modelle</h2>
                <Tools>
                    <MiniToggle />
                    <FaCamera size={15} />
                    <FaCaretDown size={11} />
                    <TargetIcon />
                    <FaRegCopy size={14} />
                    <NextIcon size={20} />
                </Tools>
            </SectionHead>
        </Section>
        <Section>
            <SectionHead>
                <h2>Ansichten</h2>
                <Tools $gap={15}>
                    <FaPlus size={12} />
                    <FaSort size={13} />
                    <FaUpload size={13} />
                    <RefreshCw size={14} />
                    <NextIcon size={20} />
                </Tools>
            </SectionHead>
        </Section>
        <Section>
            <SectionHead>
                <h2>Struktur</h2>
                <Tools>
                    <NextIcon size={20} />
                </Tools>
            </SectionHead>
        </Section>
        <Section $open>
            <SectionHead>
                <h2>Favoriten</h2>
                <Tools>
                    <OpenIcon size={20} />
                </Tools>
            </SectionHead>
            {favourites.map((name) => (
                <ElementRow key={name} name={name} starred />
            ))}
        </Section>
        <Section>
            <SectionHead>
                <h2>Elemente</h2>
                <Tools $gap={8}>
                    <EyeIcon />
                    <SmallCaps>Alle</SmallCaps>
                    <FilterMenu aria-label="Filter">
                        <FaFilter size={11} />
                        <FaCaretDown size={11} />
                    </FilterMenu>
                    <OpenIcon size={20} />
                </Tools>
            </SectionHead>
            {elementsTop.map((name, i) => (
                <ElementRow key={name} name={name} selected={i === 4} />
            ))}
            <SubList>
                <li>
                    <SubLink href="#" $active>
                        alle Instanzen (9035)
                    </SubLink>
                </li>
                <li>
                    <SubLink href="#">alle Typen (5)</SubLink>
                </li>
            </SubList>
            <AttributeRow>
                <SmallCaps>
                    Instanzen nach Attribut
                    <ChevronRight size={12} strokeWidth={4} />
                </SmallCaps>
                <FaSearch size={11} />
                <FaEllipsisH size={11} />
            </AttributeRow>
            {elementsBottom.map((name) => (
                <ElementRow key={name} name={name} />
            ))}
        </Section>
    </Sidebar>
);

const ModelViewer = () => (
    <Viewer>
        <Building />
        <ViewCube />
        <FileNames>ETH_AP_HT_HA_3D_XX_0001_TKD_SOC_EL.nwd, ...</FileNames>
        <Dock>
            <DockGroup $gap>
                <DockButton aria-label="Kommentar">
                    <FaCommentDots size={19} />
                </DockButton>
            </DockGroup>
            <DockGroup>
                <DockButton aria-label="Raster">
                    <FaTh size={21} />
                </DockButton>
            </DockGroup>
            <DockGroup>
                <DockButton aria-label="Orbit" $active>
                    <OrbitIcon />
                    <DockMark $active />
                </DockButton>
                <DockButton aria-label="Schwenken">
                    <FaHandPaper size={23} />
                </DockButton>
                <DockButton aria-label="Zoom">
                    <PanIcon />
                </DockButton>
                <DockButton aria-label="Begehen">
                    <FaMale size={24} />
                </DockButton>
                <DockButton aria-label="Kamera">
                    <VideoIcon />
                    <DockMark />
                </DockButton>
            </DockGroup>
            <DockGroup>
                <DockButton aria-label="Messen">
                    <RulerIcon />
                </DockButton>
                <DockButton aria-label="Schnitt">
                    <SectionIcon />
                    <DockMark />
                </DockButton>
                <DockButton aria-label="Ausblenden">
                    <HideIcon />
                </DockButton>
                <DockButton aria-label="Linie">
                    <FaMinus size={16} />
                </DockButton>
                <DockButton aria-label="Ebene">
                    <LevelIcon />
                </DockButton>
                <DockButton aria-label="Explodieren">
                    <ExplodeIcon />
                </DockButton>
            </DockGroup>
            <DockGroup>
                <DockButton aria-label="Struktur">
                    <FaSitemap size={24} />
                </DockButton>
                <DockButton aria-label="Eigenschaften">
                    <PropertiesIcon />
                </DockButton>
                <DockButton aria-label="Einstellungen">
                    <FaCog size={21} />
                </DockButton>
                <DockButton aria-label="Vollbild">
                    <FullscreenIcon />
                </DockButton>
            </DockGroup>
        </Dock>
        <Progress>
            <div style={{ width: '50%' }} />
        </Progress>
    </Viewer>
);

const DataToolbar = () => (
    <DataBar>
        <BarSection>
            <TealGroup>
                <button>
                    <BuildingIcon size={14} />
                    In Modell anzeigen
                </button>
                <button>Typen anzeigen</button>
                <button aria-label="Teilen">
                    <Share2 size={14} />
                </button>
                <button aria-label="Mehr">
                    <FaCaretDown size={11} />
                </button>
            </TealGroup>
            <ButtonGroup>
                <GroupButton $width={27} aria-label="Liste">
                    <FaListUl size={13} />
                </GroupButton>
            </ButtonGroup>
            <ButtonGroup $gap>
                <GroupButton $width={18} $pressed>
                    I
                </GroupButton>
                <GroupButton $width={22}>T</GroupButton>
            </ButtonGroup>
            <ButtonGroup>
                <GroupButton $width={28} aria-label="Breite">
                    <FaArrowsAltH size={14} />
                </GroupButton>
                <GroupButton $width={21} aria-label="Höhe">
                    <FaArrowsAltV size={14} />
                </GroupButton>
                <GroupButton $width={30} aria-label="Löschen">
                    <FaEraser size={13} />
                </GroupButton>
                <GroupButton $width={29} aria-label="Aktualisieren">
                    <RefreshCw size={13} strokeWidth={3} />
                </GroupButton>
            </ButtonGroup>
            <ButtonGroup>
                <GroupButton $width={26} aria-label="Färben">
                    <FaPaintBrush size={13} />
                </GroupButton>
            </ButtonGroup>
            <ButtonGroup>
                <GroupButton $width={26} aria-label="Hochladen">
                    <FaUpload size={13} />
                </GroupButton>
                <GroupButton $width={27} aria-label="Herunterladen">
                    <FaDownload size={13} />
                </GroupButton>
                <GroupButton $width={19} aria-label="Mehr">
                    <FaCaretDown size={11} />
                </GroupButton>
            </ButtonGroup>
        </BarSection>
        <FieldSection>
            <Field>
                <FieldLabel as="span">Editieren</FieldLabel>
                <ButtonPair>
                    <SquareButton aria-label="Hinzufügen">
                        <FaPlus size={10} />
                    </SquareButton>
                    <SquareButton aria-label="Entfernen">
                        <FaMinus size={10} />
                    </SquareButton>
                </ButtonPair>
            </Field>
        </FieldSection>
        <FieldSection>
            <Field>
                <FieldLabel as="span">Erweitert</FieldLabel>
                <SquareButton $small aria-label="Erweitert">
                    <FaCog size={11} />
                </SquareButton>
            </Field>
            <Field>
                <FieldLabel htmlFor="exceptions">Ausnahmen</FieldLabel>
                <SelectBox>
                    <Select id="exceptions">
                        <option>(alle)</option>
                    </Select>
                    <FaCaretDown size={11} />
                </SelectBox>
            </Field>
            <Field>
                <FieldLabel htmlFor="disciplines">Disziplinen</FieldLabel>
                <SelectBox>
                    <Select id="disciplines">
                        <option>(alle)</option>
                    </Select>
                    <FaCaretDown size={11} />
                </SelectBox>
            </Field>
            <Field $center>
                <FieldLabel as="span">Spalten</FieldLabel>
                <SquareButton $small aria-label="Spalten">
                    <Columns2 size={13} />
                </SquareButton>
            </Field>
            <Field>
                <FieldLabel htmlFor="profile">Filter-Profil</FieldLabel>
                <SelectBox>
                    <FaFilter size={11} />
                    <Select id="profile" $wide>
                        <option>(Kein Filter-Profil ge...</option>
                    </Select>
                    <FaCaretDown size={11} />
                </SelectBox>
            </Field>
        </FieldSection>
    </DataBar>
);

const InstanceTable = () => (
    <TablePanel>
        <Table>
            <colgroup>
                {columns.map((column) => (
                    <col key={column.name} width={column.width} />
                ))}
            </colgroup>
            <thead>
                <tr>
                    {columns.map((column, i) => (
                        <HeadCell key={column.name} $bar={column.bar}>
                            {i === 0 && <small>9035</small>}
                            <span>{column.name}</span>
                        </HeadCell>
                    ))}
                </tr>
            </thead>
            <tbody>
                {instances.map((row, i) => (
                    <DataRow key={row.id} $selected={i === 0}>
                        <Cell>
                            <IdLabel>
                                <CheckBox
                                    type="checkbox"
                                    defaultChecked={i === 0}
                                />
                                {row.id}
                            </IdLabel>
                        </Cell>
                        <TypeCell>WGA_STD</TypeCell>
                        <Cell colSpan={8} />
                        <Cell>Wartungsgang</Cell>
                        <Cell colSpan={4} />
                        <Cell>WGA</Cell>
                        <Cell colSpan={2} />
                        <Cell $exception={row.exception} $indent={21}>
                            {row.gap}
                        </Cell>
                        <Cell />
                        <Cell $exception={row.exception} $indent={21}>
                            {row.depth}
                        </Cell>
                        <Cell colSpan={2} />
                        <Cell>ETH_EP_FP_FA_3D_XX_0501</Cell>
                    </DataRow>
                ))}
            </tbody>
        </Table>
        <ScrollTrack />
    </TablePanel>
);

const Callouts = () => (
    <Annotations>
        <RedFrame $x={-2} $y={222} $w={75} $h={52} />
        <RedFrame $x={66} $y={582} $w={457} $h={29} />
        <RedLine $x={1275} $y={763} $w={167} $h={6} />
        <RedLine $x={1437} $y={763} $w={5} $h={60} />
        <RedFrame $x={1405} $y={821} $w={67} $h={33} />
        <RedFrame $x={1406} $y={905} $w={66} $h={34} />
        <RedFrame $x={1405} $y={1019} $w={67} $h={31} />
        <RedFrame $x={1403} $y={1077} $w={69} $h={90} />
        <Pointer width="13" height="20" viewBox="0 0 13 20">
            <path
                d="M1 1V16L4.500 12.500L7 18.500L9.500 17.500L7 11.500H12Z"
                fill="#fff"
                stroke="#111"
            />
        </Pointer>
        <RedLine $x={1587} $y={870} $w={28} $h={5} />
        <ValueTip $x={1452} $y={859} $w={137} $h={27}>
            Standardwert: &quot;0.050&quot;
        </ValueTip>
        <Callout $x={1074} $y={738} $w={201} $h={47}>
            Ausnahme
        </Callout>
        <Callout $x={1614} $y={849} $w={197} $h={43}>
            Standardwert
            <br />
            &quot;0.050&quot;
        </Callout>
        <Callout $x={1579} $y={974} $w={189} $h={79}>
            Hinweis: ein
            <br />
            Hower ziegt den
            <br />
            Typewert
            <br />
            (Standardwert)
        </Callout>
    </Annotations>
);

const App: React.FC = () => {
    return (
        <Page>
            <GlobalStyle />
            <TopBar />
            <Body>
                <LeftRail />
                <ElementPanel />
                <SideStrip>
                    <VerticalLabel>Elemente und Issues</VerticalLabel>
                </SideStrip>
                <Main>
                    <ViewBar>
                        <ViewCell>
                            <FaCube size={15} />
                            Modelle
                            <Switch type="checkbox" defaultChecked />
                        </ViewCell>
                        <ViewCell>
                            <FaPuzzlePiece size={15} />
                            Pläne
                            <Switch type="checkbox" />
                        </ViewCell>
                        <ViewCell>
                            <ChartIcon size={17} />
                            PowerBI
                            <Switch type="checkbox" />
                        </ViewCell>
                        <ViewCell>
                            <FaTable size={14} />
                            Daten
                            <Switch type="checkbox" defaultChecked />
                        </ViewCell>
                        <ViewUsers aria-label="Benutzer">
                            <FaUsers size={17} />
                        </ViewUsers>
                    </ViewBar>
                    <ModelViewer />
                    <Splitter>
                        <GripIcon />
                    </Splitter>
                    <DataToolbar />
                    <InstanceTable />
                </Main>
                <SideStrip $right>
                    <VerticalLabel>Details</VerticalLabel>
                </SideStrip>
            </Body>
            <Callouts />
        </Page>
    );
};

export default App;
